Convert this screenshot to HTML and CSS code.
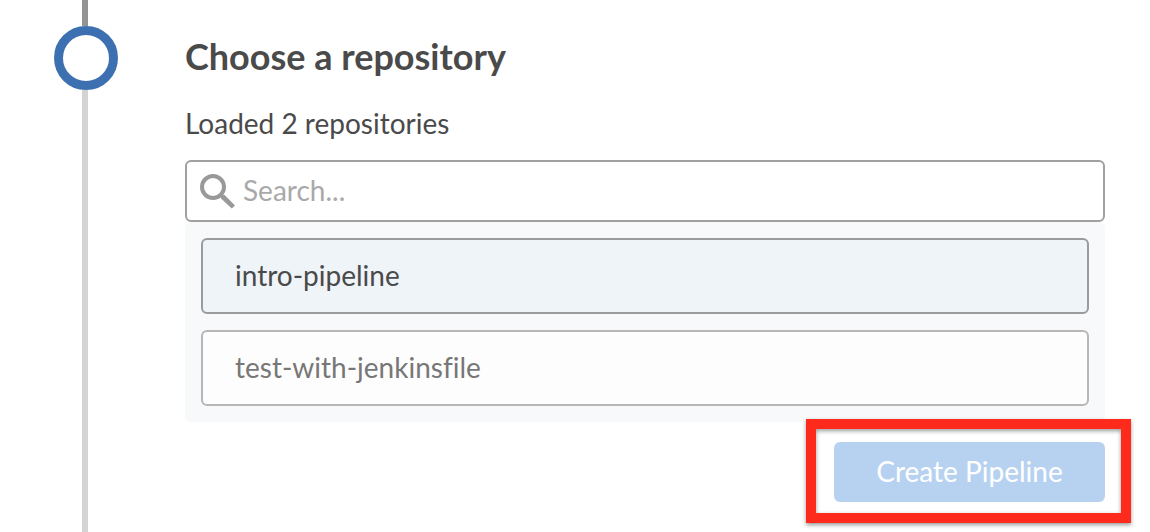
FILE: index.html
```html
<!DOCTYPE html>
<html lang="en">
<head>
<meta charset="utf-8">
<meta name="viewport" content="width=device-width, initial-scale=1">
<title>Create Pipeline</title>
<link rel="stylesheet" href="styles.css">
</head>
<body>
<main class="step">
  <div class="rail" aria-hidden="true">
    <span class="rail-done"></span>
    <span class="rail-node"></span>
    <span class="rail-next"></span>
  </div>
  <section class="content">
    <h1 class="title">Choose a repository</h1>
    <p class="status">Loaded 2 repositories</p>
    <label class="search">
      <svg class="search-icon" viewBox="0 0 36 36" aria-hidden="true">
        <circle cx="13" cy="14" r="11" fill="none" stroke="#999" stroke-width="4"/>
        <path d="M21 25.6V23.8L20.2 23L22 21.2L22.8 22H24.6L35 32.4L31.8 35.6Z" fill="#999"/>
      </svg>
      <input class="search-input" type="text" placeholder="Search..." aria-label="Search">
    </label>
    <ul class="repos">
      <li><button class="repo repo-selected" type="button">intro-pipeline</button></li>
      <li><button class="repo" type="button">test-with-jenkinsfile</button></li>
    </ul>
    <div class="actions">
      <div class="highlight">
        <button class="create" type="button">Create Pipeline</button>
      </div>
    </div>
  </section>
</main>
</body>
</html>
```
FILE: styles.css
```css
* { box-sizing: border-box; }

body {
  margin: 0;
  background: #fff;
  color: #4a4a4a;
  font-family: Lato, sans-serif;
  font-size: 28px;
  line-height: 36px;
  font-variant-ligatures: none;
}

button, input {
  font: inherit;
  font-variant-ligatures: none;
}

.step {
  display: flex;
  gap: 67px;
  min-height: 100vh;
  padding-left: 54px;
}

.rail {
  display: flex;
  flex: none;
  flex-direction: column;
  width: 64px;
}

.rail-done,
.rail-next {
  width: 6px;
  margin-left: 28px;
}

.rail-done { height: 26px; background: #949494; }

.rail-node {
  width: 64px;
  height: 64px;
  border: 9px solid #3d70b0;
  border-radius: 50%;
}

.rail-next { flex: 1; background: #d4d4d4; }

.content { flex: 1; min-width: 0; padding: 32px 19px 9px 0; }

.title {
  margin: 0;
  font-size: 36px;
  line-height: 48px;
  font-weight: 700;
}

.status { margin: 25px 0 19px; }

.search {
  display: flex;
  align-items: center;
  gap: 7px;
  height: 62px;
  margin-right: 26px;
  padding: 0 13px;
  border: 2px solid #a0a0a0;
  border-radius: 6px;
}

.search-icon { flex: none; width: 36px; height: 36px; }

.search-input {
  flex: 1;
  min-width: 0;
  padding: 0 0 2px;
  border: 0;
  outline: 0;
  background: none;
  color: inherit;
}

.search-input::placeholder { color: #a9a9a9; opacity: 1; }

.repos {
  display: grid;
  gap: 16px;
  margin: 0 26px 0 0;
  padding: 16px;
  border-radius: 6px;
  background: #f8f9fb;
  list-style: none;
}

.repo {
  display: block;
  width: 100%;
  height: 76px;
  padding: 0 32px 2px;
  border: 2px solid #b7b7b7;
  border-radius: 6px;
  background: #fdfdfd;
  color: #777;
  text-align: left;
}

.repo-selected {
  border-color: #999c9f;
  background: #eff4f9;
  color: #4a4a4a;
}

.actions { display: flex; justify-content: flex-end; margin-top: -3px; }

.highlight {
  padding: 13px 16px 11px 18px;
  border: 10px solid #fe2b1d;
  box-shadow: 0 2px 4px rgba(0, 0, 0, .4), inset 0 2px 4px rgba(0, 0, 0, .4);
}

.create {
  display: block;
  width: 271px;
  height: 60px;
  padding: 0 0 2px;
  border: 0;
  border-radius: 6px;
  background: #b7d2f1;
  color: #fff;
}
```
